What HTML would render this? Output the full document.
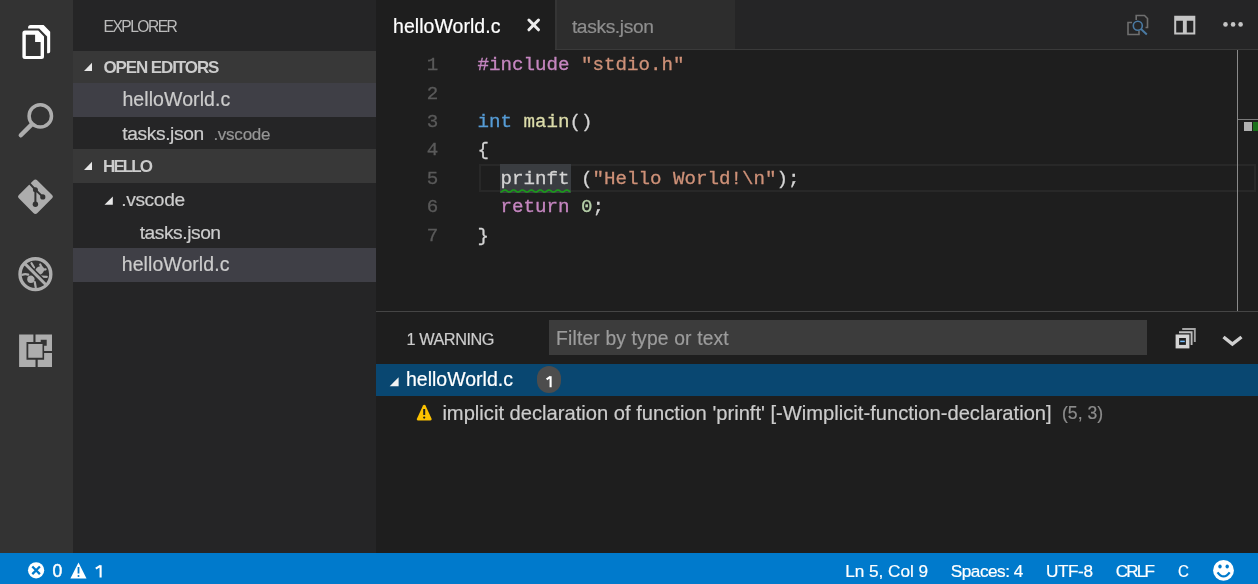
<!DOCTYPE html>
<html><head><meta charset="utf-8"><title>VS Code</title>
<style>
html,body{margin:0;padding:0;}
body{width:1258px;height:584px;overflow:hidden;position:relative;background:#1e1e1e;font-family:"Liberation Sans", sans-serif;filter:blur(0.45px);}
body>div{position:absolute;white-space:pre;}
</style></head><body>
<div style="left:0px;top:0px;width:73px;height:553px;background:#333333;"></div>
<div style="left:73px;top:0px;width:303px;height:553px;background:#252526;"></div>
<div style="left:376px;top:0px;width:882px;height:553px;background:#1e1e1e;"></div>
<div style="left:0px;top:553px;width:1258px;height:31px;background:#007acc;"></div>
<svg style="position:absolute;left:0px;top:0px" width="73" height="400" viewBox="0 0 73 400">
<path fill="#ffffff" fill-rule="evenodd" d="M24.9,30.6 H38.2 L44,36.4 V56.5 Q44,59 41.5,59 H24.9 Q22.4,59 22.4,56.5 V33.1 Q22.4,30.6 24.9,30.6 Z M25.8,34.7 V55.9 H40.6 V41.9 H35.1 V34.7 Z"/>
<path fill="#ffffff" d="M28.1,28.5 V27.6 Q28.1,25.1 30.6,25.1 H43.6 L50.2,31.7 V51.5 Q50.2,53.2 48.6,53.2 H47.1 V36.4 L39.2,28.5 Z"/>
<circle cx="40.3" cy="115.9" r="11.2" fill="none" stroke="#adadad" stroke-width="3.5"/>
<path d="M20.8,135.3 L31.5,124.6" stroke="#adadad" stroke-width="4.4" stroke-linecap="round"/>
<path fill="#adadad" d="M35.4,179.5 Q36.4,179.5 37.4,180.5 L52.3,195.3 Q53.6,196.7 52.3,198 L37.4,213 Q35.4,215 33.4,213 L18.6,198 Q17.3,196.7 18.6,195.3 L33.4,180.5 Q34.4,179.5 35.4,179.5 Z"/>
<path d="M29.1,182.8 L35.4,189.7 L42.8,196.9 M35.4,189.7 V204.2" stroke="#333333" stroke-width="2" fill="none"/>
<circle cx="35.4" cy="189.7" r="2.5" fill="#333333"/>
<circle cx="35.4" cy="204.2" r="2.7" fill="#333333"/>
<circle cx="42.8" cy="196.9" r="2.6" fill="#333333"/>
<circle cx="35.4" cy="274.2" r="15.4" fill="none" stroke="#adadad" stroke-width="3.4"/>
<ellipse cx="39.6" cy="270.6" rx="5" ry="3.9" transform="rotate(-45 39.6 270.6)" fill="#adadad"/>
<circle cx="30.9" cy="279.3" r="3.7" fill="#adadad"/>
<g stroke="#adadad" stroke-width="2.2" stroke-linecap="round" fill="none">
<path d="M31.5,263.2 L34,267.6"/><path d="M40.2,264.4 L41.4,267"/><path d="M42.6,269.6 L45.6,269.3"/>
<path d="M41.2,276.6 L46.8,276.8"/><path d="M22.4,274.8 Q25,273.6 28.2,274.6"/><path d="M34.8,282.2 L35.7,287.4"/>
</g>
<path d="M25.9,264.7 L44.9,283.7" stroke="#333333" stroke-width="6.2"/>
<path d="M24.6,263.4 L46.2,285" stroke="#adadad" stroke-width="3"/>
<path fill="#adadad" fill-rule="evenodd" d="M19.1,334.5 H33.4 V342.1 H26.5 V359.8 H35.5 V367 H19.1 Z M35.5,334.5 H52 V351 H44.1 V345.7 H46.7 V339.8 H40.7 V342.1 H35.5 Z M44.1,353 H52 V367 H37.7 V359.8 H44.1 Z M28.3,344 H42.5 V357.8 H28.3 Z"/>
</svg>
<div style="left:103.50px;top:19.29px;font-size:15.6px;line-height:15.6px;color:#bbbbbb;font-weight:400;font-family:'Liberation Sans', sans-serif;letter-spacing:-1.523px;-webkit-text-stroke:0.05px #bbb;">EXPLORER</div>
<div style="left:73px;top:51px;width:303px;height:32px;background:#383838;"></div>
<div style="left:103.50px;top:59.01px;font-size:17px;line-height:17px;color:#cccccc;font-weight:700;font-family:'Liberation Sans', sans-serif;letter-spacing:-1.115px;">OPEN EDITORS</div>
<div style="left:73px;top:83px;width:303px;height:34px;background:#3f3f46;"></div>
<div style="left:122.40px;top:90.39px;font-size:19.5px;line-height:19.5px;color:#cccccc;font-weight:400;font-family:'Liberation Sans', sans-serif;letter-spacing:0.087px;-webkit-text-stroke:0.2px #cccccc;">helloWorld.c</div>
<div style="left:122.20px;top:123.95px;font-size:19.2px;line-height:19.2px;color:#cccccc;font-weight:400;font-family:'Liberation Sans', sans-serif;letter-spacing:-0.363px;-webkit-text-stroke:0.2px #cccccc;">tasks.json</div>
<div style="left:213.40px;top:125.81px;font-size:17px;line-height:17px;color:#969696;font-weight:400;font-family:'Liberation Sans', sans-serif;letter-spacing:-0.247px;-webkit-text-stroke:0.2px #969696;">.vscode</div>
<div style="left:73px;top:149px;width:303px;height:34px;background:#383838;"></div>
<div style="left:103.10px;top:158.11px;font-size:17px;line-height:17px;color:#cccccc;font-weight:700;font-family:'Liberation Sans', sans-serif;letter-spacing:-1.953px;">HELLO</div>
<div style="left:121.20px;top:190.45px;font-size:19.2px;line-height:19.2px;color:#cccccc;font-weight:400;font-family:'Liberation Sans', sans-serif;letter-spacing:-0.361px;-webkit-text-stroke:0.2px #cccccc;">.vscode</div>
<div style="left:139.70px;top:222.95px;font-size:19.2px;line-height:19.2px;color:#cccccc;font-weight:400;font-family:'Liberation Sans', sans-serif;letter-spacing:-0.44px;-webkit-text-stroke:0.2px #cccccc;">tasks.json</div>
<div style="left:73px;top:248px;width:303px;height:34px;background:#3f3f46;"></div>
<div style="left:121.80px;top:255.39px;font-size:19.5px;line-height:19.5px;color:#cccccc;font-weight:400;font-family:'Liberation Sans', sans-serif;letter-spacing:0.06px;-webkit-text-stroke:0.2px #cccccc;">helloWorld.c</div>
<svg style="position:absolute;left:73px;top:0px" width="303" height="300" viewBox="73 0 303 300">
<path fill="#e8e8e8" d="M84,71 L92,62.8 V71 Z"/>
<path fill="#e8e8e8" d="M84,170 L92,161.8 V170 Z"/>
<path fill="#e8e8e8" d="M104.5,204.8 L112.8,196.5 V204.8 Z"/>
</svg>
<div style="left:376px;top:0px;width:882px;height:50px;background:#252526;"></div>
<div style="left:376px;top:0px;width:179px;height:50px;background:#1e1e1e;"></div>
<div style="left:555px;top:0px;width:180px;height:49px;background:#2d2d2d;"></div>
<div style="left:555px;top:49px;width:703px;height:1px;background:#3a3a3a;"></div>
<div style="left:555px;top:0px;width:2px;height:49px;background:#353535;"></div>
<div style="left:393.00px;top:16.89px;font-size:19.5px;line-height:19.5px;color:#ffffff;font-weight:400;font-family:'Liberation Sans', sans-serif;letter-spacing:0.042px;-webkit-text-stroke:0.2px #ffffff;">helloWorld.c</div>
<div style="left:571.90px;top:16.65px;font-size:19.2px;line-height:19.2px;color:#8e8e8e;font-weight:400;font-family:'Liberation Sans', sans-serif;letter-spacing:-0.363px;-webkit-text-stroke:0.2px #8e8e8e;">tasks.json</div>
<svg style="position:absolute;left:520px;top:10px" width="30" height="30" viewBox="520 10 30 30"><path d="M528.9,20 L538.5,29.8 M538.5,20 L528.9,29.8" stroke="#ececec" stroke-width="3" stroke-linecap="round"/></svg>
<svg style="position:absolute;left:1120px;top:8px" width="135" height="35" viewBox="1120 8 135 35">
<path d="M1139,15.5 H1144.5 L1147.5,18.5 V27.5 H1145.5 M1136.2,20 V15.5 H1139" fill="none" stroke="#6f6f6f" stroke-width="1.6"/>
<path d="M1132,22.5 H1128 V34.5 H1139 V31" fill="none" stroke="#6f6f6f" stroke-width="1.6"/>
<circle cx="1137.8" cy="25.8" r="4.5" fill="none" stroke="#4a7aa3" stroke-width="1.6"/>
<path d="M1141,29 L1146.8,34.5" stroke="#4a7aa3" stroke-width="1.9"/>
<path fill="#c5c5c5" fill-rule="evenodd" d="M1174.2,15.8 H1195.3 V34.5 H1174.2 Z M1176.2,20.8 V32.5 H1182.9 V20.8 Z M1186.8,20.8 V32.5 H1193.3 V20.8 Z"/>
<circle cx="1225.5" cy="24.4" r="2.3" fill="#c5c5c5"/>
<circle cx="1233.1" cy="24.4" r="2.3" fill="#c5c5c5"/>
<circle cx="1240.6" cy="24.4" r="2.3" fill="#c5c5c5"/>
</svg>
<div style="left:478.5px;top:163.6px;width:777.5px;height:28.400000000000006px;background:transparent;box-sizing:border-box;border:2px solid #282828;"></div>
<div style="left:500.4px;top:164px;width:70.30000000000007px;height:28.599999999999994px;background:#3a3d41;"></div>
<div style="left:426.75px;top:56.11px;font-size:19.17px;line-height:19.17px;color:#5a5a5a;font-weight:400;font-family:'Liberation Mono', monospace;letter-spacing:0px;-webkit-text-stroke:0.3px #5a5a5a;">1</div>
<div style="left:426.75px;top:84.51px;font-size:19.17px;line-height:19.17px;color:#5a5a5a;font-weight:400;font-family:'Liberation Mono', monospace;letter-spacing:0px;-webkit-text-stroke:0.3px #5a5a5a;">2</div>
<div style="left:426.75px;top:112.91px;font-size:19.17px;line-height:19.17px;color:#5a5a5a;font-weight:400;font-family:'Liberation Mono', monospace;letter-spacing:0px;-webkit-text-stroke:0.3px #5a5a5a;">3</div>
<div style="left:426.75px;top:141.31px;font-size:19.17px;line-height:19.17px;color:#5a5a5a;font-weight:400;font-family:'Liberation Mono', monospace;letter-spacing:0px;-webkit-text-stroke:0.3px #5a5a5a;">4</div>
<div style="left:426.75px;top:169.71px;font-size:19.17px;line-height:19.17px;color:#5a5a5a;font-weight:400;font-family:'Liberation Mono', monospace;letter-spacing:0px;-webkit-text-stroke:0.3px #5a5a5a;">5</div>
<div style="left:426.75px;top:198.11px;font-size:19.17px;line-height:19.17px;color:#5a5a5a;font-weight:400;font-family:'Liberation Mono', monospace;letter-spacing:0px;-webkit-text-stroke:0.3px #5a5a5a;">6</div>
<div style="left:426.75px;top:226.51px;font-size:19.17px;line-height:19.17px;color:#5a5a5a;font-weight:400;font-family:'Liberation Mono', monospace;letter-spacing:0px;-webkit-text-stroke:0.3px #5a5a5a;">7</div>
<div style="left:477.50px;top:56.11px;font-size:19.17px;line-height:19.17px;color:#c586c0;font-weight:400;font-family:'Liberation Mono', monospace;letter-spacing:0px;-webkit-text-stroke:0.3px #c586c0;">#include</div>
<div style="left:569.50px;top:56.11px;font-size:19.17px;line-height:19.17px;color:#d4d4d4;font-weight:400;font-family:'Liberation Mono', monospace;letter-spacing:0px;-webkit-text-stroke:0.3px #d4d4d4;"> </div>
<div style="left:581.00px;top:56.11px;font-size:19.17px;line-height:19.17px;color:#ce9178;font-weight:400;font-family:'Liberation Mono', monospace;letter-spacing:0px;-webkit-text-stroke:0.3px #ce9178;">&quot;stdio.h&quot;</div>
<div style="left:477.50px;top:112.91px;font-size:19.17px;line-height:19.17px;color:#569cd6;font-weight:400;font-family:'Liberation Mono', monospace;letter-spacing:0px;-webkit-text-stroke:0.3px #569cd6;">int</div>
<div style="left:512.00px;top:112.91px;font-size:19.17px;line-height:19.17px;color:#d4d4d4;font-weight:400;font-family:'Liberation Mono', monospace;letter-spacing:0px;-webkit-text-stroke:0.3px #d4d4d4;"> </div>
<div style="left:523.50px;top:112.91px;font-size:19.17px;line-height:19.17px;color:#dcdcaa;font-weight:400;font-family:'Liberation Mono', monospace;letter-spacing:0px;-webkit-text-stroke:0.3px #dcdcaa;">main</div>
<div style="left:569.50px;top:112.91px;font-size:19.17px;line-height:19.17px;color:#d4d4d4;font-weight:400;font-family:'Liberation Mono', monospace;letter-spacing:0px;-webkit-text-stroke:0.3px #d4d4d4;">()</div>
<div style="left:477.50px;top:141.31px;font-size:19.17px;line-height:19.17px;color:#d4d4d4;font-weight:400;font-family:'Liberation Mono', monospace;letter-spacing:0px;-webkit-text-stroke:0.3px #d4d4d4;">{</div>
<div style="left:500.50px;top:169.71px;font-size:19.17px;line-height:19.17px;color:#d4d4d4;font-weight:400;font-family:'Liberation Mono', monospace;letter-spacing:0px;-webkit-text-stroke:0.3px #d4d4d4;">prinft</div>
<div style="left:569.50px;top:169.71px;font-size:19.17px;line-height:19.17px;color:#d4d4d4;font-weight:400;font-family:'Liberation Mono', monospace;letter-spacing:0px;-webkit-text-stroke:0.3px #d4d4d4;"> (</div>
<div style="left:592.50px;top:169.71px;font-size:19.17px;line-height:19.17px;color:#ce9178;font-weight:400;font-family:'Liberation Mono', monospace;letter-spacing:0px;-webkit-text-stroke:0.3px #ce9178;">&quot;Hello World!</div>
<div style="left:742.00px;top:169.71px;font-size:19.17px;line-height:19.17px;color:#ce9178;font-weight:400;font-family:'Liberation Mono', monospace;letter-spacing:0px;-webkit-text-stroke:0.3px #ce9178;">\n</div>
<div style="left:765.00px;top:169.71px;font-size:19.17px;line-height:19.17px;color:#ce9178;font-weight:400;font-family:'Liberation Mono', monospace;letter-spacing:0px;-webkit-text-stroke:0.3px #ce9178;">&quot;</div>
<div style="left:776.50px;top:169.71px;font-size:19.17px;line-height:19.17px;color:#d4d4d4;font-weight:400;font-family:'Liberation Mono', monospace;letter-spacing:0px;-webkit-text-stroke:0.3px #d4d4d4;">);</div>
<div style="left:500.50px;top:198.11px;font-size:19.17px;line-height:19.17px;color:#c586c0;font-weight:400;font-family:'Liberation Mono', monospace;letter-spacing:0px;-webkit-text-stroke:0.3px #c586c0;">return</div>
<div style="left:569.50px;top:198.11px;font-size:19.17px;line-height:19.17px;color:#d4d4d4;font-weight:400;font-family:'Liberation Mono', monospace;letter-spacing:0px;-webkit-text-stroke:0.3px #d4d4d4;"> </div>
<div style="left:581.00px;top:198.11px;font-size:19.17px;line-height:19.17px;color:#b5cea8;font-weight:400;font-family:'Liberation Mono', monospace;letter-spacing:0px;-webkit-text-stroke:0.3px #b5cea8;">0</div>
<div style="left:592.50px;top:198.11px;font-size:19.17px;line-height:19.17px;color:#d4d4d4;font-weight:400;font-family:'Liberation Mono', monospace;letter-spacing:0px;-webkit-text-stroke:0.3px #d4d4d4;">;</div>
<div style="left:477.50px;top:226.51px;font-size:19.17px;line-height:19.17px;color:#d4d4d4;font-weight:400;font-family:'Liberation Mono', monospace;letter-spacing:0px;-webkit-text-stroke:0.3px #d4d4d4;">}</div>
<svg style="position:absolute;left:495px;top:182px" width="80" height="14" viewBox="495 182 80 14"><polyline points="500.40,192.00 500.90,191.93 501.40,191.75 501.90,191.47 502.40,191.13 502.90,190.78 503.40,190.45 503.90,190.20 504.40,190.04 504.90,190.00 505.40,190.09 505.90,190.29 506.40,190.58 506.90,190.92 507.40,191.27 507.90,191.59 508.40,191.83 508.90,191.97 509.40,191.99 509.90,191.89 510.40,191.67 510.90,191.37 511.40,191.03 511.90,190.68 512.40,190.37 512.90,190.14 513.40,190.02 513.90,190.02 514.40,190.14 514.90,190.37 515.40,190.68 515.90,191.03 516.40,191.37 516.90,191.67 517.40,191.89 517.90,191.99 518.40,191.97 518.90,191.83 519.40,191.59 519.90,191.27 520.40,190.92 520.90,190.58 521.40,190.29 521.90,190.09 522.40,190.00 522.90,190.04 523.40,190.20 523.90,190.45 524.40,190.78 524.90,191.13 525.40,191.47 525.90,191.75 526.40,191.93 526.90,192.00 527.40,191.94 527.90,191.77 528.40,191.50 528.90,191.17 529.40,190.81 529.90,190.48 530.40,190.22 530.90,190.05 531.40,190.00 531.90,190.08 532.40,190.27 532.90,190.55 533.40,190.88 533.90,191.24 534.40,191.56 534.90,191.81 535.40,191.96 535.90,192.00 536.40,191.90 536.90,191.70 537.40,191.41 537.90,191.06 538.40,190.71 538.90,190.40 539.40,190.16 539.90,190.02 540.40,190.01 540.90,190.12 541.40,190.34 541.90,190.64 542.40,190.99 542.90,191.34 543.40,191.65 543.90,191.87 544.40,191.99 544.90,191.98 545.40,191.85 545.90,191.62 546.40,191.31 546.90,190.96 547.40,190.61 547.90,190.32 548.40,190.10 548.90,190.01 549.40,190.03 549.90,190.18 550.40,190.43 550.90,190.75 551.40,191.10 551.90,191.44 552.40,191.72 552.90,191.92 553.40,192.00 553.90,191.95 554.40,191.79 554.90,191.53 555.40,191.20 555.90,190.85 556.40,190.52 556.90,190.24 557.40,190.06 557.90,190.00 558.40,190.06 558.90,190.24 559.40,190.52 559.90,190.85 560.40,191.20 560.90,191.53 561.40,191.79 561.90,191.95 562.40,192.00 562.90,191.92 563.40,191.72 563.90,191.44 564.40,191.10 564.90,190.75 565.40,190.43 565.90,190.18 566.40,190.03 566.90,190.01 567.40,190.10 567.90,190.32 568.40,190.61 568.90,190.96 569.40,191.31 569.90,191.62 570.40,191.85" fill="none" stroke="#1b9a1b" stroke-width="1.7"/></svg>
<div style="left:1237px;top:50px;width:1px;height:261px;background:#8a8a8a;"></div>
<div style="left:1238px;top:119px;width:20px;height:1px;background:#7a7a7a;"></div>
<div style="left:1244.3px;top:122px;width:8.200000000000045px;height:9px;background:#b0b0b0;"></div>
<div style="left:1252.5px;top:122px;width:5.5px;height:9px;background:#1a701a;"></div>
<div style="left:376px;top:311px;width:882px;height:1px;background:#454545;"></div>
<div style="left:406.50px;top:331.20px;font-size:16.3px;line-height:16.3px;color:#cccccc;font-weight:400;font-family:'Liberation Sans', sans-serif;letter-spacing:-0.459px;-webkit-text-stroke:0.2px #cccccc;">1 WARNING</div>
<div style="left:549px;top:320px;width:598px;height:35px;background:#3c3c3c;"></div>
<div style="left:556.10px;top:328.66px;font-size:19.3px;line-height:19.3px;color:#9c9c9c;font-weight:400;font-family:'Liberation Sans', sans-serif;letter-spacing:0.158px;-webkit-text-stroke:0.2px #9c9c9c;">Filter by type or text</div>
<svg style="position:absolute;left:1170px;top:325px" width="85" height="28" viewBox="1170 325 85 28">
<path d="M1182.2,329 H1194.8 V342.1" fill="none" stroke="#a5a5a5" stroke-width="1.9"/>
<path d="M1179,332.2 H1191.6 V344.9" fill="none" stroke="#bdbdbd" stroke-width="1.9"/>
<rect x="1177.35" y="336.25" width="10.3" height="10.4" fill="#1e1e1e" stroke="#d4d4d4" stroke-width="3.5"/>
<path d="M1180.2,341.4 H1184.8" stroke="#75beff" stroke-width="1.5"/>
<path d="M1223.5,337 L1232.4,344 L1241.5,337" fill="none" stroke="#d0d0d0" stroke-width="3.4"/>
</svg>
<div style="left:376px;top:363.5px;width:882px;height:32.0px;background:#094771;"></div>
<svg style="position:absolute;left:380px;top:370px" width="30" height="25" viewBox="380 370 30 25"><path fill="#f2f2f2" d="M389.7,386.2 L398.6,377.2 V386.2 Z"/></svg>
<div style="left:406.00px;top:370.49px;font-size:19.5px;line-height:19.5px;color:#ffffff;font-weight:400;font-family:'Liberation Sans', sans-serif;letter-spacing:0px;-webkit-text-stroke:0.2px #ffffff;">helloWorld.c</div>
<div style="left:536.5px;top:366.3px;width:24.0px;height:27.0px;background:#4d4d4d;border-radius:12px;"></div>
<svg style="position:absolute;left:540px;top:370px" width="20" height="22" viewBox="540 370 20 22"><path d="M550.6,376.2 V387.2 M546.6,379.4 L550.6,376.6" stroke="#ffffff" stroke-width="2.1" fill="none"/></svg>
<svg style="position:absolute;left:410px;top:400px" width="30" height="25" viewBox="410 400 30 25">
<path fill="#fcc200" d="M424.2,404.8 Q425,404.8 425.5,405.6 L431.6,418.8 Q432,420.5 430.3,420.5 H417.9 Q416.4,420.5 416.9,418.8 L423,405.6 Q423.5,404.8 424.2,404.8 Z"/>
<path d="M424.2,409 V415" stroke="#1e1e1e" stroke-width="2"/>
<circle cx="424.2" cy="417.6" r="1.1" fill="#1e1e1e"/>
</svg>
<div style="left:442.40px;top:402.73px;font-size:20.17px;line-height:20.17px;color:#cccccc;font-weight:400;font-family:'Liberation Sans', sans-serif;letter-spacing:0px;-webkit-text-stroke:0.2px #cccccc;">implicit declaration of function 'prinft' [-Wimplicit-function-declaration]</div>
<div style="left:1062.00px;top:404.90px;font-size:17.6px;line-height:17.6px;color:#8c8c8c;font-weight:400;font-family:'Liberation Sans', sans-serif;letter-spacing:0px;-webkit-text-stroke:0.2px #8c8c8c;">(5, 3)</div>
<svg style="position:absolute;left:0px;top:553px" width="130" height="31" viewBox="0 553 130 31">
<circle cx="36.1" cy="570.3" r="8.1" fill="#ffffff"/>
<path d="M32.3,566.5 L39.9,574.1 M39.9,566.5 L32.3,574.1" stroke="#007acc" stroke-width="2.3"/>
<path fill="#ffffff" d="M78.5,562.4 L86.5,578.5 H70.4 Z"/>
<path d="M78.5,567 V573.5" stroke="#007acc" stroke-width="1.8"/>
<circle cx="78.5" cy="576" r="1" fill="#007acc"/>
</svg>
<div style="left:52.50px;top:563.19px;font-size:17.5px;line-height:17.5px;color:#ffffff;font-weight:400;font-family:'Liberation Sans', sans-serif;letter-spacing:0px;-webkit-text-stroke:0.5px #fff;">0</div>
<svg style="position:absolute;left:90px;top:560px" width="20" height="22" viewBox="90 560 20 22"><path d="M100.6,565.2 V577.6 M95.8,568.6 L100.6,565.6" stroke="#ffffff" stroke-width="2.1" fill="none"/></svg>
<div style="left:845.30px;top:562.84px;font-size:17.2px;line-height:17.2px;color:#ffffff;font-weight:400;font-family:'Liberation Sans', sans-serif;letter-spacing:-0.048px;-webkit-text-stroke:0.2px #ffffff;">Ln 5, Col 9</div>
<div style="left:950.80px;top:562.84px;font-size:17.2px;line-height:17.2px;color:#ffffff;font-weight:400;font-family:'Liberation Sans', sans-serif;letter-spacing:-0.499px;-webkit-text-stroke:0.2px #ffffff;">Spaces: 4</div>
<div style="left:1046.00px;top:562.84px;font-size:17.2px;line-height:17.2px;color:#ffffff;font-weight:400;font-family:'Liberation Sans', sans-serif;letter-spacing:-0.432px;-webkit-text-stroke:0.2px #ffffff;">UTF-8</div>
<div style="left:1115.80px;top:562.84px;font-size:17.2px;line-height:17.2px;color:#ffffff;font-weight:400;font-family:'Liberation Sans', sans-serif;letter-spacing:-1.903px;-webkit-text-stroke:0.2px #ffffff;">CRLF</div>
<div style="left:1177.70px;top:563.04px;font-size:17.2px;line-height:17.2px;color:#ffffff;font-weight:400;font-family:'Liberation Sans', sans-serif;letter-spacing:0px;-webkit-text-stroke:0.2px #ffffff;transform:scaleX(0.88);transform-origin:0 0;">C</div>
<svg style="position:absolute;left:1205px;top:556px" width="40" height="28" viewBox="1205 556 40 28">
<circle cx="1223.5" cy="570.4" r="10.4" fill="#ffffff"/>
<ellipse cx="1220" cy="566.5" rx="1.7" ry="2.1" fill="#007acc"/>
<ellipse cx="1227.2" cy="566.5" rx="1.7" ry="2.1" fill="#007acc"/>
<path d="M1217.5,572.3 Q1223.6,580.6 1229.7,572.3" fill="none" stroke="#007acc" stroke-width="2.2"/>
</svg>
</body></html>
